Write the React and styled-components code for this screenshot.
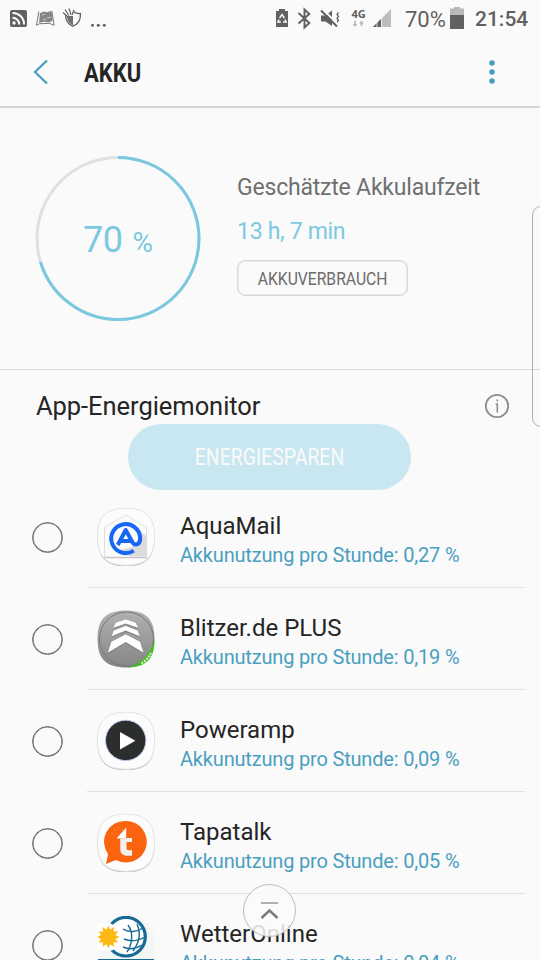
import React from "react";
import styled, { createGlobalStyle } from "styled-components";

const GlobalStyle = createGlobalStyle`
  * {
    box-sizing: border-box;
  }
  body {
    margin: 0;
    background: #fafafa;
    font-family: Roboto, "Liberation Sans", sans-serif;
  }
  svg {
    display: block;
    flex-shrink: 0;
  }
`;

const Screen = styled.div`
  position: relative;
  width: 540px;
  height: 960px;
  overflow: hidden;
  background: #fafafa;
`;

const StatusBar = styled.div`
  display: flex;
  justify-content: space-between;
  height: 38px;
  color: #616161;
`;

const StatusRight = styled.div`
  display: flex;
`;

const StatusText = styled.span`
  width: ${(p) => p.$width}px;
  font-size: ${(p) => p.$size}px;
  font-weight: ${(p) => p.$weight || 400};
  line-height: 39px;
  white-space: nowrap;
`;

const AppBar = styled.header`
  display: flex;
  align-items: center;
  height: 70px;
  padding: 0 44px 0 33px;
  border-bottom: 2px solid #d5d5d5;
`;

/* Texto estreito, comprimido na horizontal */
const Condensed = styled.span`
  display: inline-block;
  transform: scaleX(${(p) => p.$scale});
  transform-origin: ${(p) => p.$origin || "center"};
  white-space: nowrap;
`;

const Title = styled.h1`
  flex: 1;
  margin: 1px 0 0 34px;
  font-size: 26px;
  font-weight: 700;
  line-height: 30px;
  color: #252525;
`;

const Summary = styled.section`
  display: flex;
  height: 262px;
  padding: 47px 0 0 35px;
  border-bottom: 1px solid #d9d9d9;
`;

const Gauge = styled.div`
  display: grid;
  width: 166px;
  height: 166px;

  > * {
    grid-area: 1 / 1;
  }
`;

const GaugeText = styled.div`
  display: flex;
  align-items: baseline;
  padding: 63px 0 0 48px;
  font-size: 36px;
  line-height: 44px;
  letter-spacing: -0.5px;
  color: #7ac9e1;
`;

const Percent = styled.span`
  margin-left: 10px;
  font-size: 28px;
`;

const Estimate = styled.div`
  display: flex;
  flex-direction: column;
  align-items: flex-start;
  padding: 19px 0 0 36px;
`;

const EstimateLabel = styled.div`
  font-size: 23px;
  line-height: 28px;
  letter-spacing: -0.2px;
  color: #707070;
`;

const EstimateTime = styled.div`
  margin-top: 16px;
  font-size: 23px;
  line-height: 28px;
  letter-spacing: -0.3px;
  color: #7ac9e1;
`;

const UsageButton = styled.button`
  display: flex;
  align-items: center;
  justify-content: center;
  width: 171px;
  height: 36px;
  margin-top: 14px;
  padding: 1px 0 0;
  border: 1px solid #d8d8d8;
  border-radius: 8px;
  box-shadow: inset 0 0 0 0.5px #d8d8d8;
  background: transparent;
  font: 400 19px Roboto, sans-serif;
  color: #6c6c6c;
`;

const MonitorHeader = styled.div`
  display: flex;
  align-items: center;
  justify-content: space-between;
  height: 54px;
  padding: 18px 30px 0 36px;
  font-size: 25.5px;
  letter-spacing: -0.05px;
  color: #252525;
`;

const SaveButton = styled.button`
  display: flex;
  align-items: center;
  justify-content: center;
  width: 283px;
  height: 66px;
  margin: 0 0 0 128px;
  padding: 0;
  border: 0;
  border-radius: 33px;
  background: #c9e7f1;
  font: 400 23px Roboto, sans-serif;
  color: #fafafa;
`;

const List = styled.div`
  margin-top: -4px;
`;

const Row = styled.div`
  display: flex;
  height: 102px;
  padding: 0 15px 0 32px;
`;

const Radio = styled.span`
  flex-shrink: 0;
  width: 31px;
  height: 31px;
  margin: 36px 24px 0 0;
  border: 1px solid #6b6b6b;
  border-radius: 50%;
  box-shadow: inset 0 0 0 0.6px #6b6b6b;
`;

const RowBody = styled.div`
  display: flex;
  flex: 1;
  padding: 22px 0 0 10px;
  border-bottom: 1px solid #e1e1e1;
`;

const RowText = styled.div`
  padding: 4px 0 0 25px;
  white-space: nowrap;
`;

const AppName = styled.div`
  font-size: 24px;
  line-height: 28px;
  color: #252525;
`;

const AppUsage = styled.div`
  margin-top: 3px;
  font-size: 20px;
  line-height: 24px;
  letter-spacing: -0.18px;
  color: #4a9fc0;
`;

const ScrollTop = styled.div`
  position: absolute;
  left: 243px;
  top: 884px;
  display: flex;
  align-items: center;
  justify-content: center;
  width: 53px;
  height: 53px;
  border: 1px solid #bcbcbc;
  border-radius: 50%;
  background: rgba(250, 250, 250, 0.85);
`;

const EdgeHandle = styled.div`
  position: absolute;
  left: 532px;
  top: 206px;
  width: 20px;
  height: 221px;
  border: 1px solid #b0b0b0;
  border-radius: 9px;
`;

const SQUIRCLE =
  "M29 .5C49 .5 57.5 9 57.5 29S49 57.5 29 57.5.5 49 .5 29 9 .5 29 .5Z";

const Tile = ({ children }) => (
  <svg width="58" height="58" viewBox="0 0 58 58">
    <path d={SQUIRCLE} transform="translate(0 .7)" fill="#b5b5b5" />
    <path d={SQUIRCLE} transform="translate(0 -.3)" fill="#fcfcfc" stroke="#e3e3e3" strokeWidth="1" />
    {children}
  </svg>
);

const AquaMailIcon = () => (
  <Tile>
    <path d="M28.7 8 7.5 20v30.2H50V20Z" fill="#bdbdbd" />
    <path d="M28.7 7 7.5 19.3V49h42V19.3Z" fill="#fbfbfb" stroke="#dadada" strokeWidth=".8" />
    <path d="m40 20 9 8v20.5H33L23 42l12-3 6-8Z" fill="#dcdcdc" />
    <path
      d="M36.8 42.6A14.5 14.5 0 1 1 43.2 30c0 4.9-2.3 6.6-4.6 6.6-2.2 0-3-1.6-4-4L28.7 22 20.8 37M24 33h10"
      fill="none"
      stroke="#1766f5"
      strokeWidth="4"
      strokeLinejoin="round"
    />
  </Tile>
);

const BlitzerIcon = () => (
  <svg width="58" height="58" viewBox="0 0 58 58">
    <defs>
      <linearGradient id="blitzer" x1="0" y1="0" x2="0" y2="1">
        <stop offset="0" stopColor="#b2b2b2" />
        <stop offset="1" stopColor="#858585" />
      </linearGradient>
      <clipPath id="blitzerClip">
        <path d={SQUIRCLE} />
      </clipPath>
    </defs>
    <g clipPath="url(#blitzerClip)">
      <rect width="58" height="58" fill="url(#blitzer)" />
      <circle cx="29.5" cy="29" r="27" fill="none" stroke="#777" strokeWidth="1" />
      <path d="M58 29v29H30C44 54 53 45 58 29Z" fill="#3fc21e" />
      <path d="M44.5 53.5C48 51 51.5 48 54 43" fill="none" stroke="#e5f5df" strokeWidth="2" strokeDasharray="2 1.2" />
    </g>
    <g fill="#606060" opacity=".4" transform="translate(0 1.2)">
      <path d="m28.7 10 10 3.5 2.4 4.6-12.4-4.3-12.4 4.3 2.4-4.6Z" />
      <path d="m28.7 16.6 12.6 4.8 1.7 5-14.3-5.4-14.3 5.4 1.7-5Z" />
      <path d="m28.7 24.7 14.5 7.5 3.5 10.8-18-11-18 11 3.5-10.8Z" />
    </g>
    <g fill="#fff">
      <path d="m28.7 9.6 9.8 3.2 2.6 5-12.4-4.3-12.4 4.3 2.6-5Z" />
      <path d="m28.7 16 12 4.8 2 5.4-14-5.6-14 5.6 2-5.4Z" />
      <path d="m28.7 24.4 14.3 7.3 3.5 11-17.8-10.6-17.8 10.6 3.5-11Z" />
    </g>
  </svg>
);

const PowerampIcon = () => (
  <Tile>
    <circle cx="28.7" cy="28.4" r="20.2" fill="#2c2d2d" stroke="#b8caf0" strokeWidth="1" />
    <path d="M23 20v17.4l15.4-8.7Z" fill="#fff" />
  </Tile>
);

const TapatalkIcon = () => (
  <Tile>
    <path d="M29 7a20.8 20.8 0 1 1-9.9 39.1L9 50l2-10A20.8 20.8 0 0 1 29 7Z" fill="#fb640e" />
    <path d="M29.2 13.5v11H19.5Z" fill="#fff" />
    <path
      d="M23.3 24.4V35c0 4.5 2.5 6.8 7 6.8H35v-5.6h-3.2c-1.6 0-2.3-.7-2.3-2.2v-6H35v-4h-5.8v.4Z"
      fill="#f0f0f0"
    />
    <g fill="#ffb27f">
      <circle cx="18" cy="16" r=".6" />
      <circle cx="21" cy="13.5" r=".6" />
      <circle cx="15" cy="19.5" r=".6" />
      <circle cx="19.5" cy="19" r=".6" />
    </g>
  </Tile>
);

const WetterIcon = () => (
  <svg width="58" height="58" viewBox="0 0 58 58">
    <path d={SQUIRCLE} fill="#f4f5f5" />
    <circle cx="29" cy="20.7" r="19.3" fill="#fff" stroke="#156a96" strokeWidth="3.2" />
    <path d="M0 7h13c6 3 10 8 10 14s-4 11-8 13.5H0Z" fill="#fff" />
    <path
      d="M26 13c6 4 14 3 20-1M27 23c7 3 14 2 21-2M26 31c7 3 13 2 19-2M31 9c6 8 4 20-1 27M40 8c4 9 2 19-4 27"
      fill="none"
      stroke="#156a96"
      strokeWidth="1.4"
    />
    <g fill="#fdb913" transform="translate(11.3 20.9)">
      <circle r="7.8" />
      {[0, 30, 60, 90, 120, 150, 180, 210, 240, 270, 300, 330].map((angle) => (
        <path key={angle} d="M-2-7 0-11.3 2-7Z" transform={`rotate(${angle})`} />
      ))}
    </g>
    <path d="M1 43h56v2H1Z" fill="#156a96" />
  </svg>
);

const apps = [
  { name: "AquaMail", usage: "0,27", Icon: AquaMailIcon },
  { name: "Blitzer.de PLUS", usage: "0,19", Icon: BlitzerIcon },
  { name: "Poweramp", usage: "0,09", Icon: PowerampIcon },
  { name: "Tapatalk", usage: "0,05", Icon: TapatalkIcon },
  { name: "WetterOnline", usage: "0,04", Icon: WetterIcon },
];

/* Notificações do lado esquerdo */
const Notifications = () => (
  <svg width="120" height="38" viewBox="0 0 120 38">
    <rect x="10" y="10" width="17" height="17" rx="2" fill="#616161" />
    <path
      d="M12.5 13A11 11 0 0 1 24 24.5M12.5 17.8A6.5 6.5 0 0 1 19.2 24.5"
      fill="none"
      stroke="#fafafa"
      strokeWidth="2"
    />
    <circle cx="14" cy="23" r="1.7" fill="#fafafa" />
    <path d="m38.8 11.5-2.3 13.8 3-1.6 10-.3 4.6 1.9-2.2-14" fill="none" stroke="#777" strokeWidth="1" />
    <path d="m40 13 4-1.5 3 .8 4.5-1.6 1 10-4 1.8-4-.8-5.5 1Z" fill="#858585" />
    <path d="m42 15 3-1M47 18l4-1M43 20l3-1" stroke="#c8c8c8" strokeWidth="1" />
    <path
      d="M73.5 11.8c2.2 1.5 4.5 2 7 1.7.3 6-2 10.500-7.700 12.700-5-2-7.200-6-7.200-11.200"
      fill="none"
      stroke="#616161"
      strokeWidth="1.3"
    />
    <path d="M66.8 16h6.2v9.5C69 23.500 67 20.500 66.800 16Z" fill="#707070" />
    <path
      d="m63 12.5 4.500 4M65 9.500l4 6M69 8.500l2 6M74 10l-2 5"
      fill="none"
      stroke="#616161"
      strokeWidth="1.2"
    />
    <g fill="#616161">
      <circle cx="92.5" cy="25.2" r="1.5" />
      <circle cx="98.3" cy="25.2" r="1.5" />
      <circle cx="104.3" cy="25.2" r="1.5" />
    </g>
  </svg>
);

/* Economia, bluetooth, mudo, rede e sinal */
const SystemIcons = () => (
  <svg width="135" height="38" viewBox="270 0 135 38">
    <path d="M276 11h3V9h6v2h3v16h-12Z" fill="#616161" />
    <path
      d="m279.6 18 2.4-3.5 2.4 3.5M279 19.5l-1.1 2.5h3M285 19.5l1.1 2.5h-3"
      fill="none"
      stroke="#fafafa"
      strokeWidth="1.5"
    />
    <path d="m298.5 13 10.8 10-4.8 4.5v-18l4.800 4.500-10.800 9.500" fill="none" stroke="#616161" strokeWidth="2" />
    <path d="M321 15.5h4.5l6.5-5V26l-6.5-4.5H321Z" fill="#616161" />
    <path d="m322.5 9 16 16" stroke="#fafafa" strokeWidth="2" />
    <path d="m321 10.5 16 16" stroke="#616161" strokeWidth="2" />
    <path d="m338.5 12.5-1.5 2 1.5 2-1.5 2 1.5 2-1.5 1.5" fill="none" stroke="#616161" strokeWidth="1.3" />
    <text x="351.5" y="18" fontSize="11" fontWeight="700" fill="#616161" fontFamily="Open Sans, sans-serif">
      4G
    </text>
    <path d="M355 21v4M361.5 26v-4" stroke="#b8b8b8" strokeWidth="1.8" />
    <path d="m352.7 24 2.3 3 2.3-3ZM359.2 23.5l2.3-3 2.3 3Z" fill="#b8b8b8" />
    <path d="m373 27 18-18v18Z" fill="#bdbdbd" />
    <path d="m373 27 8-8v8Z" fill="#616161" />
    <path d="M377 19v8M381.5 15v12" stroke="#fafafa" strokeWidth=".8" />
  </svg>
);

const BatteryIcon = () => (
  <svg width="25" height="38" viewBox="0 0 25 38">
    <path d="M0 8.5h4V7h6v1.5h4V15H0Z" fill="#b8b8b8" />
    <path d="M0 15h14v14H0Z" fill="#616161" />
  </svg>
);

export default class App extends React.Component {
  render() {
    return (
      <Screen>
        <GlobalStyle />
        <StatusBar>
          <Notifications />
          <StatusRight>
            <SystemIcons />
            <StatusText $width={45} $size={22}>
              70%
            </StatusText>
            <BatteryIcon />
            <StatusText $width={65} $size={21} $weight={500}>
              21:54
            </StatusText>
          </StatusRight>
        </StatusBar>
        <AppBar>
          <svg width="17" height="26" viewBox="0 0 17 26">
            <path d="M14 1.5 2 13l12 11.5" fill="none" stroke="#459fc2" strokeWidth="2.2" />
          </svg>
          <Title>
            <Condensed $scale={0.845} $origin="left">AKKU</Condensed>
          </Title>
          <svg width="8" height="26" viewBox="0 0 8 26" fill="#459fc2">
            <circle cx="4" cy="4" r="2.8" />
            <circle cx="4" cy="13" r="2.8" />
            <circle cx="4" cy="22" r="2.8" />
          </svg>
        </AppBar>
        <Summary>
          <Gauge>
            <svg width="166" height="166" viewBox="0 0 166 166">
              <circle cx="83" cy="83.5" r="81" fill="none" stroke="#e0e0e0" strokeWidth="3" />
              <circle
                cx="83"
                cy="83.5"
                r="81"
                fill="none"
                stroke="#7ac9e1"
                strokeWidth="3"
                pathLength="100"
                strokeDasharray="70.3 29.7"
                transform="rotate(-90 83 83.5)"
              />
            </svg>
            <GaugeText>
              70<Percent>%</Percent>
            </GaugeText>
          </Gauge>
          <Estimate>
            <EstimateLabel>Geschätzte Akkulaufzeit</EstimateLabel>
            <EstimateTime>13 h, 7 min</EstimateTime>
            <UsageButton>
              <Condensed $scale={0.825}>AKKUVERBRAUCH</Condensed>
            </UsageButton>
          </Estimate>
        </Summary>
        <MonitorHeader>
          App-Energiemonitor
          <svg width="26" height="26" viewBox="0 0 26 26">
            <circle cx="13" cy="13" r="11.2" fill="none" stroke="#8d8d8d" strokeWidth="1.8" />
            <path d="M11.5 11h1.800v8.500M13.300 6.500v2" fill="none" stroke="#8d8d8d" strokeWidth="1.6" />
          </svg>
        </MonitorHeader>
        <SaveButton>
          <Condensed $scale={0.845}>ENERGIESPAREN</Condensed>
        </SaveButton>
        <List>
          {apps.map(({ name, usage, Icon }) => (
            <Row key={name}>
              <Radio />
              <RowBody>
                <Icon />
                <RowText>
                  <AppName>{name}</AppName>
                  <AppUsage>Akkunutzung pro Stunde: {usage} %</AppUsage>
                </RowText>
              </RowBody>
            </Row>
          ))}
        </List>
        <EdgeHandle />
        <ScrollTop>
          <svg width="20" height="20" viewBox="0 0 20 20" fill="none">
            <path d="M1 2h17" stroke="#b0b0b0" strokeWidth="2" />
            <path d="m1.5 17 8-7.500 8 7.500" stroke="#7b7b7b" strokeWidth="2.5" />
          </svg>
        </ScrollTop>
      </Screen>
    );
  }
}
